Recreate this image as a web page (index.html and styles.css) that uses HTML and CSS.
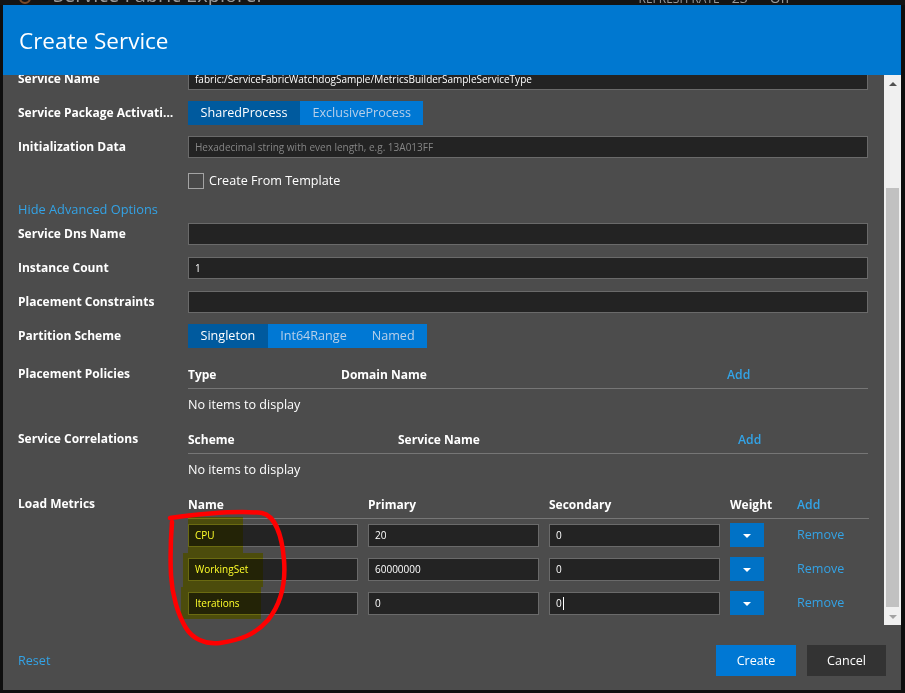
FILE: index.html
```html
<!DOCTYPE html>
<html lang="en">
<head>
<meta charset="utf-8">
<title>Create Service</title>
<link rel="stylesheet" href="styles.css">
</head>
<body>
<div class="topbar">
  <span class="logo"></span>
  <span class="brand">Service Fabric Explorer</span>
  <span class="spacer"></span>
  <span class="refresh">REFRESH RATE</span>
  <span class="rate">23</span>
  <span class="off">Off</span>
</div>

<div class="modal">
  <div class="modal-header"><h1>Create Service</h1></div>
  <div class="modal-main">
    <div class="scroll-body" id="scrollBody">
      <div class="form">
        <div class="row mb12">
          <div class="label">Service Type</div>
          <div class="control"><input class="field" type="text" value="MetricsBuilderSampleServiceType"></div>
        </div>
        <div class="row mb11">
          <div class="label">Service Name</div>
          <div class="control"><input id="svcName" class="field" type="text" value="fabric:/ServiceFabricWatchdogSample/MetricsBuilderSampleServiceType"></div>
        </div>
        <div class="row mb11">
          <div class="label seg-label">Service Package Activation Mode</div>
          <div class="control">
            <div class="seg">
              <span class="seg-btn active">SharedProcess</span><span class="seg-btn">ExclusiveProcess</span>
            </div>
          </div>
        </div>
        <div class="row mb15">
          <div class="label">Initialization Data</div>
          <div class="control"><input class="field" type="text" placeholder="Hexadecimal string with even length, e.g. 13A013FF"></div>
        </div>
        <div class="row mb11 check-row">
          <div class="label"></div>
          <div class="control check"><span class="box"></span><span class="check-text">Create From Template</span></div>
        </div>
        <div class="row mb5 link-row">
          <a class="link adv">Hide Advanced Options</a>
        </div>
        <div class="row mb12">
          <div class="label">Service Dns Name</div>
          <div class="control"><input class="field" type="text"></div>
        </div>
        <div class="row mb12">
          <div class="label">Instance Count</div>
          <div class="control"><input class="field" type="text" value="1"></div>
        </div>
        <div class="row mb11">
          <div class="label">Placement Constraints</div>
          <div class="control"><input class="field" type="text"></div>
        </div>
        <div class="row mb14">
          <div class="label seg-label">Partition Scheme</div>
          <div class="control">
            <div class="seg">
              <span class="seg-btn active">Singleton</span><span class="seg-btn">Int64Range</span><span class="seg-btn">Named</span>
            </div>
          </div>
        </div>

        <div class="row">
          <div class="label th-label">Placement Policies</div>
          <div class="control">
            <div class="thead cols-policies">
              <span>Type</span><span>Domain Name</span><a class="link">Add</a>
            </div>
            <div class="empty">No items to display</div>
          </div>
        </div>

        <div class="row">
          <div class="label th-label">Service Correlations</div>
          <div class="control">
            <div class="thead cols-corr">
              <span>Scheme</span><span>Service Name</span><a class="link">Add</a>
            </div>
            <div class="empty">No items to display</div>
          </div>
        </div>

        <div class="row">
          <div class="label th-label">Load Metrics</div>
          <div class="control metrics">
            <div class="thead cols-metrics">
              <span>Name</span><span>Primary</span><span>Secondary</span><span>Weight</span><a class="link">Add</a>
            </div>
            <div class="mrow cols-metrics">
              <input class="field small w170" type="text" value="CPU">
              <input class="field small w171" type="text" value="20">
              <input class="field small w171" type="text" value="0">
              <span class="weight"><span class="caret"></span></span>
              <a class="link">Remove</a>
            </div>
            <div class="mrow cols-metrics">
              <input class="field small w170" type="text" value="WorkingSet">
              <input class="field small w171" type="text" value="60000000">
              <input class="field small w171" type="text" value="0">
              <span class="weight"><span class="caret"></span></span>
              <a class="link">Remove</a>
            </div>
            <div class="mrow cols-metrics">
              <input class="field small w170" type="text" value="Iterations">
              <input class="field small w171" type="text" value="0">
              <div class="field small w171 typed">0<span class="text-caret"></span></div>
              <span class="weight"><span class="caret"></span></span>
              <a class="link">Remove</a>
            </div>
          </div>
        </div>
      </div>
    </div>
    <div class="scrollbar">
      <div class="sb-btn"><span class="sb-up"></span></div>
      <div class="sb-track"><div class="sb-thumb"></div></div>
      <div class="sb-btn"><span class="sb-down"></span></div>
    </div>
  </div>
  <div class="modal-footer">
    <a class="link reset">Reset</a>
    <span class="spacer"></span>
    <button class="btn primary">Create</button>
    <button class="btn secondary">Cancel</button>
  </div>
</div>

<svg class="annot-hl" width="905" height="693" viewBox="0 0 905 693" aria-hidden="true">
  <rect x="188" y="517" width="55" height="36" fill="#ffff28"/>
  <rect x="183" y="553" width="80" height="34" fill="#ffff28"/>
  <rect x="181" y="587" width="80" height="32" fill="#ffff28"/>
</svg>
<svg class="annot" width="905" height="693" viewBox="0 0 905 693" aria-hidden="true">
  <path d="M170 518 C 200 514, 235 510, 262 513 C 275 516, 282 535, 284 560 C 286 585, 280 605, 268 620 C 255 635, 240 640, 220 643 C 205 645, 192 638, 186 628 C 178 615, 172 595, 171 575 C 170 555, 171 535, 172 522" fill="none" stroke="#ff0000" stroke-width="4.5" stroke-linecap="round" stroke-linejoin="round"/>
</svg>

<script src="script.js"></script>
</body>
</html>
```

FILE: styles.css
```css
* { box-sizing: border-box; }

html, body {
  margin: 0;
  padding: 0;
}

body {
  width: 905px;
  height: 693px;
  overflow: hidden;
  position: relative;
  background: #0e0e0e;
  font-family: "Open Sans", "Noto Sans", sans-serif;
  color: #fff;
}

/* background page header, mostly covered by the dialog */
.topbar {
  height: 5px;
  overflow: hidden;
  display: flex;
  align-items: flex-end;
  background: #141414;
  color: #9a9a9a;
}
.topbar .logo {
  width: 12px;
  height: 12px;
  margin-left: 19px;
  border: 2px solid #7a4a2a;
  border-radius: 50%;
  margin-bottom: 1px;
  flex: none;
}
.topbar .brand {
  margin-left: 22px;
  font-size: 20px;
  line-height: 20px;
}
.topbar .spacer { flex: 1; }
.topbar .refresh { font-size: 12px; line-height: 12px; }
.topbar .rate { font-size: 14px; line-height: 14px; margin-left: 12px; }
.topbar .off { font-size: 14px; line-height: 14px; margin-left: 22px; margin-right: 115px; }

/* dialog */
.modal {
  position: absolute;
  left: 3px;
  top: 5px;
  width: 898px;
  height: 685px;
  display: flex;
  flex-direction: column;
  background: #4c4c4c;
}

.modal-header {
  height: 70px;
  flex: none;
  background: #0078d0;
  padding-left: 16px;
}
.modal-header h1 {
  margin: 0;
  padding-top: 2px;
  font-size: 22.5px;
  font-weight: 400;
  line-height: 67px;
  color: #fff;
}

.modal-main {
  height: 550px;
  flex: none;
  display: flex;
}

.scroll-body {
  flex: 1;
  overflow: hidden;
}

.form {
  padding: 10px 16px 30px 15px;
}

.row {
  display: flex;
  align-items: flex-start;
}
.mb5 { margin-bottom: 5px; }
.mb11 { margin-bottom: 11px; }
.mb12 { margin-bottom: 12px; }
.mb14 { margin-bottom: 14px; }
.mb15 { margin-bottom: 15px; }

.label {
  flex: none;
  width: 170px;
  padding-right: 12px;
  font-size: 12px;
  font-weight: 700;
  line-height: 22px;
  white-space: nowrap;
  overflow: hidden;
  text-overflow: ellipsis;
  color: #fff;
}
.seg-label { line-height: 24px; }
.th-label { line-height: 24px; }

.control {
  flex: 1;
  min-width: 0;
}

.field {
  display: block;
  width: 100%;
  height: 22px;
  margin: 0;
  padding: 0 6px;
  border: 1px solid #6a6a6a;
  border-radius: 0;
  background: #232323;
  color: #fff;
  font-family: "Open Sans", "Noto Sans", sans-serif;
  font-size: 10px;
  outline: none;
}
.field::placeholder {
  color: #858585;
  font-size: 10px;
}
.field.small {
  height: 23px;
  font-size: 10px;
}
.typed {
  display: flex;
  align-items: center;
  line-height: 21px;
}
.text-caret {
  width: 1px;
  height: 13px;
  background: #fff;
  margin-left: 1px;
}
.w170 { width: 170px; }
.w171 { width: 171px; }

.seg {
  display: flex;
  height: 24px;
}
.seg-btn {
  padding: 0 12.5px;
  line-height: 24px;
  font-size: 12.6px;
  background: #0078d4;
  color: #b7cfe9;
}
.seg-btn.active {
  background: #005a9e;
  color: #fff;
}

.check-row { height: 16px; }
.check {
  display: flex;
  align-items: center;
  height: 16px;
}
.box {
  width: 16px;
  height: 16px;
  border: 1px solid #a3a3a3;
  background: #484848;
  flex: none;
}
.check-text {
  margin-left: 5px;
  font-size: 12.6px;
  line-height: 16px;
}

.link {
  color: #33a3e6;
  font-size: 12.6px;
  cursor: pointer;
}
.link-row { height: 18px; }
.adv {
  line-height: 18px;
  font-size: 12.8px;
}

/* tables */
.thead {
  display: grid;
  height: 27px;
  align-items: center;
  padding-bottom: 2px;
  border-bottom: 1px solid #767676;
  font-size: 12px;
  font-weight: 700;
}
.thead .link { font-weight: 600; font-size: 12.2px; }
.cols-policies { grid-template-columns: 153px 386px 1fr; }
.cols-corr { grid-template-columns: 210px 340px 1fr; }
.cols-metrics { grid-template-columns: 180px 181px 181px 67px 1fr; }
.metrics { margin-right: -1px; }

.empty {
  height: 38px;
  padding-top: 7px;
  line-height: 17px;
  font-size: 12.6px;
}

.mrow {
  display: grid;
  align-items: center;
  height: 24px;
  margin-top: 10px;
}
.thead + .mrow { margin-top: 4px; }
.mrow .link { font-size: 12.6px; margin-top: -2px; }

.weight {
  width: 34px;
  height: 24px;
  background: #0072c6;
  display: flex;
  align-items: center;
  justify-content: center;
}
.caret {
  width: 0;
  height: 0;
  border-left: 4px solid transparent;
  border-right: 4px solid transparent;
  border-top: 4px solid #fff;
  margin-top: 1px;
}

/* scrollbar */
.scrollbar {
  flex: none;
  width: 17px;
  display: flex;
  flex-direction: column;
  background: #f0f0f0;
}
.sb-btn {
  height: 17px;
  flex: none;
  display: flex;
  align-items: center;
  justify-content: center;
}
.sb-up {
  width: 0;
  height: 0;
  border-left: 4px solid transparent;
  border-right: 4px solid transparent;
  border-bottom: 4px solid #505050;
}
.sb-down {
  width: 0;
  height: 0;
  border-left: 4px solid transparent;
  border-right: 4px solid transparent;
  border-top: 4px solid #a3a3a3;
}
.sb-track {
  flex: 1;
  display: flex;
  flex-direction: column;
  padding: 96px 2px 1px 2px;
}
.sb-thumb {
  flex: 1;
  background: #c1c1c1;
}

/* footer */
.modal-footer {
  flex: 1;
  display: flex;
  align-items: flex-start;
  padding: 20px 15px 0 15px;
}
.modal-footer .spacer { flex: 1; }
.reset {
  line-height: 31px;
  font-size: 12.6px;
}
.btn {
  height: 31px;
  margin: 0;
  border: 0;
  border-radius: 0;
  font-family: "Open Sans", "Noto Sans", sans-serif;
  font-size: 12.6px;
  color: #fff;
  padding: 0;
}
.btn.primary { width: 80px; background: #0078d4; }
.btn.secondary { width: 79px; margin-left: 11px; background: #333333; }

/* hand-drawn annotation over the screenshot */
.annot-hl {
  position: absolute;
  left: 0;
  top: 0;
  pointer-events: none;
  mix-blend-mode: multiply;
}
.annot {
  position: absolute;
  left: 0;
  top: 0;
  pointer-events: none;
}
```

FILE: script.js
```js
(function () {
  var body = document.getElementById('scrollBody');
  var target = document.getElementById('svcName');
  body.scrollTop = 0;
  body.scrollTop = target.getBoundingClientRect().top - 68;
})();
```
